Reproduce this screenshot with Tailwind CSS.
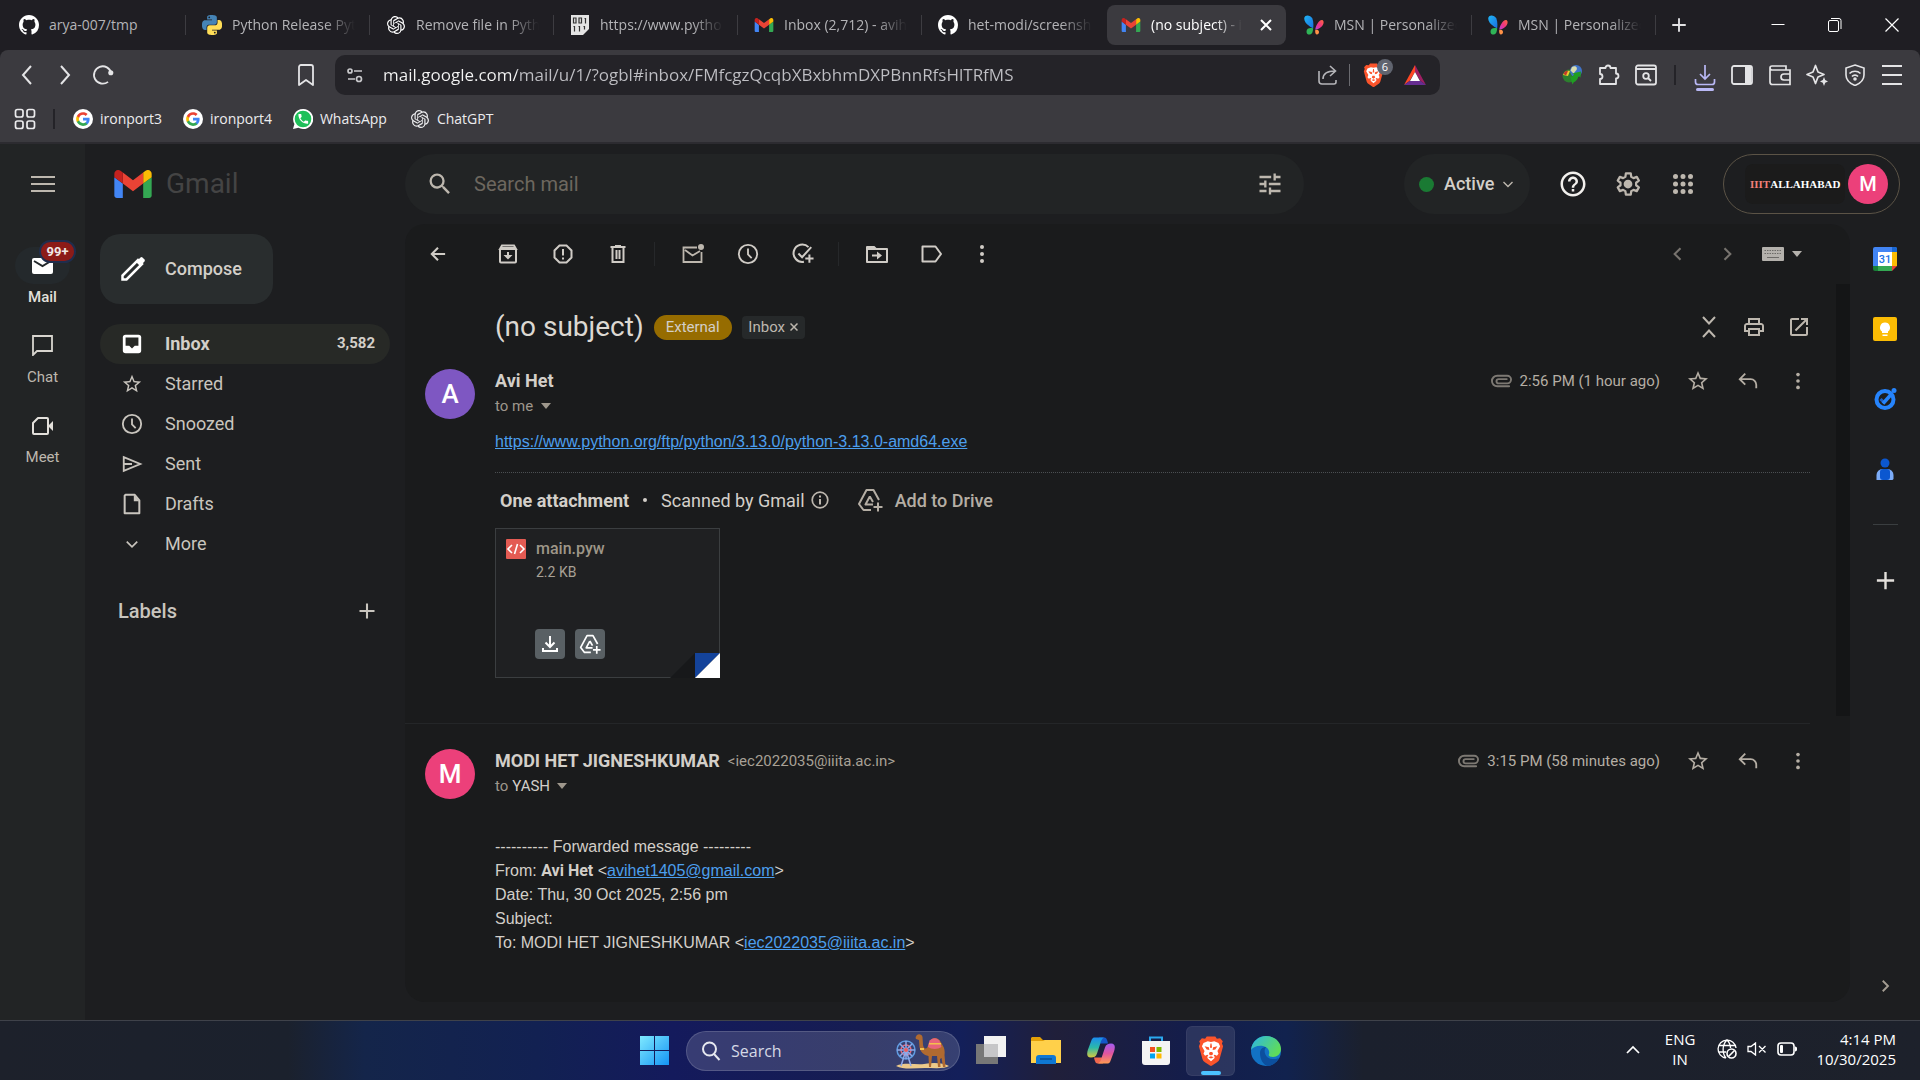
<!DOCTYPE html>
<html lang="en">
<head>
<meta charset="utf-8">
<title>(no subject) - Gmail</title>
<script src="https://cdn.jsdelivr.net/npm/@tailwindcss/browser@4"></script>
</head>
<body class="flex min-h-screen flex-col bg-[#1d1e20] font-['Roboto','Liberation_Sans',sans-serif] text-[#d3cfc9]">

<!-- Shared icon shapes -->
<svg class="absolute size-0" aria-hidden="true">
  <defs><linearGradient id="wingL" x1="0" y1="0" x2="1" y2="1"><stop offset="0" stop-color="#1fb6f5"/><stop offset="1" stop-color="#1a6fe0"/></linearGradient><linearGradient id="wingR" x1="1" y1="0" x2="0" y2="1"><stop offset="0" stop-color="#ff6a3d"/><stop offset=".5" stop-color="#f0357f"/><stop offset="1" stop-color="#b63de0"/></linearGradient></defs>
  <symbol id="github" viewBox="0 0 16 16"><path fill="currentColor" d="M8 0C3.58 0 0 3.58 0 8c0 3.54 2.29 6.53 5.47 7.59.4.07.55-.17.55-.38 0-.19-.01-.82-.01-1.49-2.01.37-2.53-.49-2.69-.94-.09-.23-.48-.94-.82-1.13-.28-.15-.68-.52-.01-.53.63-.01 1.08.58 1.23.82.72 1.21 1.87.87 2.33.66.07-.52.28-.87.51-1.07-1.78-.2-3.64-.89-3.64-3.95 0-.87.31-1.59.82-2.15-.08-.2-.36-1.02.08-2.12 0 0 .67-.21 2.2.82.64-.18 1.32-.27 2-.27.68 0 1.36.09 2 .27 1.53-1.04 2.2-.82 2.2-.82.44 1.1.16 1.92.08 2.12.51.56.82 1.27.82 2.15 0 3.07-1.87 3.75-3.65 3.95.29.25.54.73.54 1.48 0 1.07-.01 1.93-.01 2.2 0 .21.15.46.55.38A8.013 8.013 0 0 0 16 8c0-4.42-3.58-8-8-8z"/></symbol>
  <symbol id="openai" viewBox="0 0 24 24"><path fill="currentColor" d="M22.2819 9.8211a5.9847 5.9847 0 0 0-.5157-4.9108 6.0462 6.0462 0 0 0-6.5098-2.9A6.0651 6.0651 0 0 0 4.9807 4.1818a5.9847 5.9847 0 0 0-3.9977 2.9 6.0462 6.0462 0 0 0 .7427 7.0966 5.98 5.98 0 0 0 .511 4.9107 6.051 6.051 0 0 0 6.5146 2.9001A5.9847 5.9847 0 0 0 13.2599 24a6.0557 6.0557 0 0 0 5.7718-4.2058 5.9894 5.9894 0 0 0 3.9977-2.9001 6.0557 6.0557 0 0 0-.7475-7.0729zm-9.022 12.6081a4.4755 4.4755 0 0 1-2.8764-1.0408l.1419-.0804 4.7783-2.7582a.7948.7948 0 0 0 .3927-.6813v-6.7369l2.02 1.1686a.071.071 0 0 1 .038.052v5.5826a4.504 4.504 0 0 1-4.4945 4.4944zm-9.6607-4.1254a4.4708 4.4708 0 0 1-.5346-3.0137l.142.0852 4.783 2.7582a.7712.7712 0 0 0 .7806 0l5.8428-3.3685v2.3324a.0804.0804 0 0 1-.0332.0615L9.74 19.9502a4.4992 4.4992 0 0 1-6.1408-1.6464zM2.3408 7.8956a4.485 4.485 0 0 1 2.3655-1.9728V11.6a.7664.7664 0 0 0 .3879.6765l5.8144 3.3543-2.0201 1.1685a.0757.0757 0 0 1-.071 0l-4.8303-2.7865A4.504 4.504 0 0 1 2.3408 7.872zm16.5963 3.8558L13.1038 8.364 15.1192 7.2a.0757.0757 0 0 1 .071 0l4.8303 2.7913a4.4944 4.4944 0 0 1-.6765 8.1042v-5.6772a.79.79 0 0 0-.407-.667zm2.0107-3.0231l-.142-.0852-4.7735-2.7818a.7759.7759 0 0 0-.7854 0L9.409 9.2297V6.8974a.0662.0662 0 0 1 .0284-.0615l4.8303-2.7866a4.4992 4.4992 0 0 1 6.6802 4.66zM8.3065 12.863l-2.02-1.1638a.0804.0804 0 0 1-.038-.0567V6.0742a4.4992 4.4992 0 0 1 7.3757-3.4537l-.142.0805L8.704 5.459a.7948.7948 0 0 0-.3927.6813zm1.0976-2.3654l2.602-1.4998 2.6069 1.4998v2.9994l-2.5974 1.4997-2.6067-1.4997Z"/></symbol>
  <symbol id="gmail" viewBox="52 42 88 66"><path fill="#4285f4" d="M58 108h14V74L52 59v43c0 3.32 2.69 6 6 6"/><path fill="#34a853" d="M120 108h14c3.32 0 6-2.69 6-6V59l-20 15"/><path fill="#fbbc04" d="M120 48v26l20-15v-8c0-7.42-8.47-11.65-14.4-7.2"/><path fill="#ea4335" d="M72 74V48l24 18 24-18v26L96 92"/><path fill="#c5221f" d="M52 51v8l20 15V48l-5.6-4.2c-5.94-4.45-14.4-.22-14.4 7.2"/></symbol>
  <symbol id="google" viewBox="0 0 32 32"><circle cx="16" cy="16" r="16" fill="#fff"/><g transform="translate(4 4)"><path fill="#4285f4" d="M22.56 12.25c0-.78-.07-1.53-.2-2.25H12v4.26h5.92c-.26 1.37-1.04 2.53-2.21 3.31v2.77h3.57c2.08-1.92 3.28-4.74 3.28-8.09z"/><path fill="#34a853" d="M12 23c2.97 0 5.46-.98 7.28-2.66l-3.57-2.77c-.98.66-2.23 1.06-3.71 1.06-2.86 0-5.29-1.93-6.16-4.53H2.18v2.84C3.99 20.53 7.7 23 12 23z"/><path fill="#fbbc05" d="M5.84 14.09c-.22-.66-.35-1.36-.35-2.09s.13-1.43.35-2.09V7.07H2.18C1.43 8.55 1 10.22 1 12s.43 3.45 1.18 4.93l2.85-2.22.81-.62z"/><path fill="#ea4335" d="M12 5.38c1.62 0 3.06.56 4.21 1.64l3.15-3.15C17.45 2.09 14.97 1 12 1 7.7 1 3.99 3.47 2.18 7.07l3.66 2.84c.87-2.6 3.3-4.53 6.16-4.53z"/></g></symbol>
  <symbol id="msn" viewBox="0 0 24 24"><path fill="url(#wingL)" d="M.5 3C1.500-1 8 0 10 4c1.500 4 1.500 8 1 12-2-1-3-1-5-3C2 10-.5 6 .5 3z"/><path fill="#2fb457" d="M3 20c0-4 4-5 8-4-.3 4-1 7-4 7.500-2 .3-4-1-4-3.500z"/><path fill="url(#wingR)" d="M23.500 8c-.5-3-4-2.500-6 .5-2 2.500-3.500 6-4 9 2.500.2 5-1 7-3 2-2 3.300-4 3-6.500z"/><path fill="#ff9147" d="M13.500 18c2-.5 4.500 0 4.500 2.500 0 1.500-1 3-2.500 3S13 21 13.500 18z"/></symbol>
  <symbol id="brave" viewBox="0 0 24 28"><path fill="#fb542b" d="M17.500 2.600 16 .5H8L6.500 2.600 3.500 2.200 1 5l.8 2L.7 9.600 4 21.500c.5 1.500 1.200 2.200 2.300 3L11 27.600c.7.500 1.300.5 2 0l4.700-3.100c1.100-.8 1.800-1.500 2.300-3L23.300 9.600 22.200 7l.8-2-2.500-2.800z"/><path fill="#fff" d="M12 5.500 15 5l4 1.500 1.500 3-2.500 4.500 1 2.500-1.500 2-2-1-1 .5 1 1.500-.5 1.500-3 2.500-3-2.500-.5-1.500 1-1.500-1-.5-2 1-1.500-2 1-2.500-2.500-4.500L5 6.500 9 5z"/><path fill="#fb542b" d="M6 9.500 10 10.500 10.500 13 8 12.500zM18 9.500 14 10.500 13.500 13 16 12.500zM10.800 15h2.400l.8 2-2 1.300L10 17zM9.500 19.800l2.500-.9 2.500.9-2.500 1.300zM11.500 7h1l.5 4h-2z"/></symbol>
  <symbol id="clock" viewBox="0 0 24 24"><g fill="none" stroke="currentColor" stroke-width="2"><circle cx="12" cy="12" r="10"/><path d="M12 6v6.500l4 4"/></g></symbol>
  <symbol id="star" viewBox="0 0 24 24"><path fill="currentColor" d="M22 9.240l-7.190-.62L12 2 9.190 8.630 2 9.240l5.460 4.730L5.820 21 12 17.270 18.180 21l-1.630-7.030L22 9.240zM12 15.400l-3.760 2.270 1-4.280-3.320-2.880 4.380-.38L12 6.100l1.710 4.040 4.380.38-3.320 2.880 1 4.280L12 15.400z"/></symbol>
  <symbol id="search" viewBox="0 0 24 24"><path fill="currentColor" d="M15.500 14h-.79l-.28-.27A6.471 6.471 0 0 0 16 9.500 6.500 6.500 0 1 0 9.500 16c1.610 0 3.090-.59 4.230-1.570l.27.280v.79l5 4.990L20.490 19l-4.990-5zm-6 0C7.010 14 5 11.990 5 9.500S7.010 5 9.500 5 14 7.010 14 9.500 11.990 14 9.500 14z"/></symbol>
  <symbol id="dots" viewBox="0 0 24 24"><g fill="currentColor"><circle cx="12" cy="5" r="2"/><circle cx="12" cy="12" r="2"/><circle cx="12" cy="19" r="2"/></g></symbol>
  <symbol id="reply" viewBox="0 0 24 24"><path fill="none" stroke="currentColor" stroke-width="2" d="M9 4 3 10l6 6M3.500 10H15a6 6 0 0 1 6 6v4"/></symbol>
  <symbol id="clip" viewBox="0 0 22 14"><path fill="none" stroke="currentColor" stroke-width="2" stroke-linecap="round" d="M19 12.500H6.500a5.500 5.500 0 0 1 0-11H17a4 4 0 0 1 0 8H8a2.200 2.200 0 0 1 0-4.500h8.500"/></symbol>
  <symbol id="plus" viewBox="0 0 24 24"><path fill="none" stroke="currentColor" stroke-width="2.500" d="M12 3v18M3 12h18"/></symbol>
  <symbol id="left" viewBox="0 0 24 24"><path fill="none" stroke="currentColor" stroke-width="2.500" d="m15 5-7 7 7 7"/></symbol>
  <symbol id="right" viewBox="0 0 24 24"><path fill="none" stroke="currentColor" stroke-width="2.500" d="m9 5 7 7-7 7"/></symbol>
  <symbol id="down" viewBox="0 0 24 24"><path fill="none" stroke="currentColor" stroke-width="2.800" d="m3 8 9 9 9-9"/></symbol>
  <symbol id="caret" viewBox="0 0 10 6"><path fill="currentColor" d="M0 0h10L5 6z"/></symbol>
  <symbol id="drive" viewBox="0 0 26 26"><path fill="none" stroke="currentColor" stroke-width="2" stroke-linejoin="round" d="M14 23H6.500L2 17 9.500 3h7l5.500 10M12.800 9.500 8.500 17.500H16M12.800 9.500l3.200 5.500M21 15.500v9M16.500 20h9"/></symbol>
</svg>

<!-- Tab strip -->
<nav aria-label="Tabs" class="flex h-[50px] items-center bg-[#1f1e23] pl-[2px] font-['Open_Sans','Noto_Sans',sans-serif] text-sm text-[#b4b4b7]">
  <a href="#" class="flex h-5 w-[184px] items-center gap-[10px] border-r border-[#3d3c41] pr-[14px] pl-[17px] text-white"><svg class="size-5 shrink-0"><use href="#github"/></svg><span class="flex-1 overflow-hidden whitespace-nowrap text-[#b4b4b7]">arya-007/tmp</span></a>
  <a href="#" class="flex h-5 w-[184px] items-center gap-[10px] border-r border-[#3d3c41] pr-[14px] pl-[16px]"><svg class="size-5 shrink-0" viewBox="0 0 24 24"><path fill="#4584b6" d="M14.25.18l.9.2.73.26.59.3.45.32.34.34.25.34.16.33.1.3.04.26.02.2-.01.13V8.500l-.05.63-.13.55-.21.46-.26.38-.3.31-.33.25-.35.19-.35.14-.33.1-.3.07-.26.04-.21.02H8.770l-.69.05-.59.14-.5.22-.41.27-.33.32-.27.35-.2.36-.15.37-.1.35-.07.32-.04.27-.02.21v3.060H3.170l-.21-.03-.28-.07-.32-.12-.35-.18-.36-.26-.36-.36-.35-.46-.32-.59-.28-.73-.21-.88-.14-1.050-.05-1.230.06-1.220.16-1.040.24-.87.32-.71.36-.57.4-.44.42-.33.42-.24.4-.16.36-.1.32-.05.24-.01h.16l.06.01h8.160v-.83H6.180l-.01-2.750-.02-.37.05-.34.11-.31.17-.28.25-.26.31-.23.38-.2.44-.18.51-.15.58-.12.64-.1.71-.06.77-.04.84-.02 1.270.05zm-6.300 1.980l-.23.33-.08.41.08.41.23.34.33.22.41.09.41-.09.33-.22.23-.34.08-.41-.08-.41-.23-.33-.33-.22-.41-.09-.41.09z"/><path fill="#ffde57" d="M21.100 6.110l.28.06.32.12.35.18.36.27.36.35.35.47.32.59.28.73.21.88.14 1.040.05 1.230-.06 1.230-.16 1.040-.24.86-.32.71-.36.57-.4.45-.42.33-.42.24-.4.16-.36.09-.32.05-.24.02-.16-.01h-8.220v.82h5.840l.01 2.760.02.36-.05.34-.11.31-.17.29-.25.25-.31.24-.38.2-.44.17-.51.15-.58.13-.64.09-.71.07-.77.04-.84.01-1.270-.04-1.070-.14-.9-.2-.73-.25-.59-.3-.45-.33-.34-.34-.25-.34-.16-.33-.1-.3-.04-.25-.02-.2.01-.13v-5.340l.05-.64.13-.54.21-.46.26-.38.3-.32.33-.24.35-.2.35-.14.33-.1.3-.06.26-.04.21-.02.13-.01h5.840l.69-.05.59-.14.5-.21.41-.28.33-.32.27-.35.2-.36.15-.36.1-.35.07-.32.04-.28.02-.21V6.070h2.090l.14.01zm-6.470 14.250l-.23.33-.08.41.08.41.23.33.33.23.41.08.41-.08.33-.23.23-.33.08-.41-.08-.41-.23-.33-.33-.23-.41-.08-.41.08z"/></svg><span class="flex-1 overflow-hidden whitespace-nowrap [mask-image:linear-gradient(to_right,black_75%,transparent)]">Python Release Python</span></a>
  <a href="#" class="flex h-5 w-[184px] items-center gap-[10px] border-r border-[#3d3c41] pr-[14px] pl-[16px]"><svg class="size-5 shrink-0 p-px text-white"><use href="#openai"/></svg><span class="flex-1 overflow-hidden whitespace-nowrap [mask-image:linear-gradient(to_right,black_75%,transparent)]">Remove file in Python</span></a>
  <a href="#" class="flex h-5 w-[184px] items-center gap-[10px] border-r border-[#3d3c41] pr-[14px] pl-[16px]"><svg class="size-5 shrink-0" viewBox="0 0 20 20"><path fill="#e4e4e4" d="M1 0h18v14l-6 6H1z"/><path fill="none" stroke="#333" stroke-width="1.200" d="M3.500 3h2.500v5H3.500zM9 3h2.500v5H9zM14.500 3.500h1v5M3.500 11.500h1v5M8.500 11.500h1v5M13.500 11.500h1v3"/></svg><span class="flex-1 overflow-hidden whitespace-nowrap [mask-image:linear-gradient(to_right,black_75%,transparent)]">https://www.python.org</span></a>
  <a href="#" class="flex h-5 w-[184px] items-center gap-[10px] border-r border-[#3d3c41] pr-[14px] pl-[16px]"><svg class="h-[14px] w-5 shrink-0"><use href="#gmail"/></svg><span class="flex-1 overflow-hidden whitespace-nowrap [mask-image:linear-gradient(to_right,black_75%,transparent)]">Inbox (2,712) - avihet</span></a>
  <a href="#" class="flex h-5 w-[184px] items-center gap-[10px] pr-[14px] pl-[16px]"><svg class="size-5 shrink-0 text-white"><use href="#github"/></svg><span class="flex-1 overflow-hidden whitespace-nowrap [mask-image:linear-gradient(to_right,black_75%,transparent)]">het-modi/screenshot</span></a>
  <div class="mr-[2px] ml-px flex h-10 w-[179px] items-center gap-[10px] rounded-lg bg-[#3b3a3f] pr-[14px] pl-[14px]"><svg class="h-[14px] w-5 shrink-0"><use href="#gmail"/></svg><a href="#" class="flex-1 overflow-hidden whitespace-nowrap text-white [mask-image:linear-gradient(to_right,black_65%,transparent_92%)]">(no subject) - iec</a><button aria-label="Close tab" class="text-white"><svg class="size-3" viewBox="0 0 12 12"><path stroke="currentColor" stroke-width="2" d="m1 1 10 10M11 1 1 11"/></svg></button></div>
  <a href="#" class="flex h-5 w-[184px] items-center gap-[10px] border-r border-[#3d3c41] pr-[14px] pl-[16px]"><svg class="size-5 shrink-0"><use href="#msn"/></svg><span class="flex-1 overflow-hidden whitespace-nowrap [mask-image:linear-gradient(to_right,black_75%,transparent)]">MSN | Personalized</span></a>
  <a href="#" class="flex h-5 w-[184px] items-center gap-[10px] border-r border-[#3d3c41] pr-[14px] pl-[16px]"><svg class="size-5 shrink-0"><use href="#msn"/></svg><span class="flex-1 overflow-hidden whitespace-nowrap [mask-image:linear-gradient(to_right,black_75%,transparent)]">MSN | Personalized</span></a>
  <button aria-label="New tab" class="flex w-[46px] justify-center text-[#e2e2e4]"><svg class="size-[18px]"><use href="#plus"/></svg></button>
  <div class="ml-auto flex text-white">
    <button aria-label="Minimize" class="flex w-[57px] justify-center"><svg class="size-4" viewBox="0 0 16 16"><path stroke="currentColor" d="M1.500 7.500h13"/></svg></button>
    <button aria-label="Restore" class="flex w-[57px] justify-center"><svg class="size-4" viewBox="0 0 16 16" fill="none" stroke="currentColor"><rect x="1.500" y="3.500" width="10" height="11" rx="1.500"/><path d="M4 1.500h8a2 2 0 0 1 2 2V12"/></svg></button>
    <button aria-label="Close" class="flex w-[57px] justify-center"><svg class="size-4" viewBox="0 0 16 16"><path stroke="currentColor" stroke-width="1.200" d="m1.500 1.500 13 13M14.500 1.500l-13 13"/></svg></button>
  </div>
</nav>

<!-- Browser toolbar -->
<div class="bg-[#1f1e23] font-['Open_Sans','Noto_Sans',sans-serif]">
<div class="rounded-t-lg border-b-2 border-[#2c2b30] bg-[#3b3a3f] text-[#e4e4e6]">
  <div class="flex h-[50px] items-center">
    <div class="flex w-[335px] shrink-0 items-center pl-2">
      <button aria-label="Back" class="flex w-[38px] justify-center"><svg class="h-5 w-4" viewBox="0 0 16 20"><path fill="none" stroke="currentColor" stroke-width="2" d="m12 1-8 9 8 9"/></svg></button>
      <button aria-label="Forward" class="flex w-[38px] justify-center"><svg class="h-5 w-4" viewBox="0 0 16 20"><path fill="none" stroke="currentColor" stroke-width="2" d="m4 1 8 9-8 9"/></svg></button>
      <button aria-label="Reload" class="flex w-[38px] justify-center"><svg class="size-[22px]" viewBox="0 0 24 24"><path fill="none" stroke="currentColor" stroke-width="2" d="M17.500 19.500A9.500 9.500 0 1 1 21 10"/><circle cx="20.500" cy="9.500" r="2.800" fill="currentColor"/></svg></button>
      <button aria-label="Bookmark" class="mr-[14px] ml-auto flex w-[30px] justify-center"><svg class="h-[22px] w-4" viewBox="0 0 16 22"><path fill="none" stroke="currentColor" stroke-width="1.800" stroke-linejoin="round" d="M1 3a2 2 0 0 1 2-2h10a2 2 0 0 1 2 2v18l-7-5-7 5z"/></svg></button>
    </div>
    <div class="flex h-10 flex-1 items-center rounded-[10px] bg-[#242328] pr-[6px] pl-3">
      <svg class="size-4 text-[#c9c9cc]" viewBox="0 0 16 16" fill="none" stroke="currentColor" stroke-width="1.700"><circle cx="3" cy="4" r="2"/><path d="M7 4h8M1 12h7"/><circle cx="12" cy="12" r="2.500"/></svg>
      <label for="url" class="sr-only">Address</label>
      <input id="url" type="text" value="mail.google.com/mail/u/1/?ogbl#inbox/FMfcgzQcqbXBxbhmDXPBnnRfsHlTRfMS" class="ml-5 min-w-0 flex-1 bg-linear-[to_right,#f5f5f5_134px,#bfbfc4_134px] bg-clip-text text-[17px] text-transparent outline-none">
      <button aria-label="Share" class="flex w-9 justify-center text-[#b5b5b9]"><svg class="size-5" viewBox="0 0 20 20" fill="none" stroke="currentColor" stroke-width="1.600"><path d="M1 6v10a3 3 0 0 0 3 3h12a2 2 0 0 0 2-2v-2M5 14c0-6 4-8 12-8M12 1l5.500 5-5.500 5"/></svg></button>
      <span class="ml-[3px] h-[22px] w-px bg-[#6b6b70]"></span>
      <button aria-label="Brave Shields" class="relative flex w-[46px] justify-center"><svg class="h-[24px] w-[21px]"><use href="#brave"/></svg><span class="absolute -top-[4px] right-[3px] size-[16px] rounded-full bg-[#60646f] text-center text-[11px] leading-4 text-white">6</span></button>
      <button aria-label="Brave Rewards" class="flex w-[38px] justify-center"><svg class="h-5 w-[22px]" viewBox="0 0 22 20"><path fill="#ff4724" d="M11 0v7L5.500 16 0 20z"/><path fill="#9e1f63" d="M11 0v7l5.500 9 5.500 4z"/><path fill="#662d91" d="M0 20l5.500-4h11l5.500 4z"/><path fill="#fff" d="m11 7 5 9H6z"/></svg></button>
    </div>
    <div class="flex w-[480px] shrink-0 items-center justify-end pr-[9px]">
      <div class="grid w-[111px] grid-cols-3 justify-items-center">
        <button aria-label="Download manager"><svg class="size-5" viewBox="0 0 20 20"><circle cx="7" cy="11" r="6.500" fill="#2c7f2e"/><path fill="#e8cf31" d="M1 10c1-4 5-5 7-4l-2 5z"/><path fill="#c3392b" d="M1.500 9c1-3 3-3.500 4.500-3l-2 4.500z"/><circle cx="14" cy="6" r="6" fill="#3f73c8"/><path fill="#d9dcae" d="M10 2c3-2 6 0 4.500 3l-3 3.500-3-3z"/><path fill="#1f9e22" d="M8 11c1 2 3 1 4-2l-2-.5 9-2-.5 6-2-1.500c-.5 3-2 5-5 6.500l-1 2-1-3z"/></svg></button>
        <button aria-label="Extensions"><svg class="size-[22px]" viewBox="0 0 22 22"><path fill="none" stroke="currentColor" stroke-width="1.800" stroke-linejoin="round" d="M2 4h5.500a2.500 2.500 0 1 1 5 0H18v5.500a2.500 2.500 0 1 1 0 5V20H2v-5a2.500 2.500 0 0 0 0-5z"/></svg></button>
        <button aria-label="Search tabs"><svg class="size-[22px]" viewBox="0 0 22 22" fill="none" stroke="currentColor" stroke-width="1.800"><rect x="1" y="1.500" width="20" height="19" rx="2"/><path d="M1 5h20M13 14l3 3"/><circle cx="11" cy="12" r="2.800"/></svg></button>
      </div>
      <span class="mx-[10px] h-5 w-[2px] bg-[#242328]"></span>
      <div class="grid w-[225px] grid-cols-6 justify-items-center">
        <button aria-label="Downloads" class="relative text-[#b9b8f5]"><svg class="size-[22px]" viewBox="0 0 22 22" fill="none" stroke="currentColor" stroke-width="1.700"><path d="M11 1v14M6 10l5 5 5-5M1.500 15v3a2.500 2.500 0 0 0 2.500 2.500h14a2.500 2.500 0 0 0 2.500-2.500v-3"/></svg><span class="absolute -bottom-[5px] left-[2px] h-[3px] w-[18px] rounded bg-[#b9b8f5]"></span></button>
        <button aria-label="Sidebar"><svg class="size-[22px]" viewBox="0 0 22 22"><rect x="1" y="2" width="20" height="18" rx="2" fill="none" stroke="currentColor" stroke-width="1.800"/><path fill="currentColor" d="M14 2h6v18h-6z"/></svg></button>
        <button aria-label="Wallet"><svg class="size-[22px]" viewBox="0 0 22 22" fill="none" stroke="currentColor" stroke-width="1.700"><path d="M1 4v14a2.500 2.500 0 0 0 2.500 2.500H21V6H3a2 2 0 0 1 0-4h14v4M21 10h-6a3 3 0 0 0 0 6h6"/></svg></button>
        <button aria-label="Leo AI"><svg class="size-[22px]" viewBox="0 0 22 22"><path fill="none" stroke="currentColor" stroke-width="1.700" stroke-linejoin="round" d="M9.500 1.500 12 8l6 2.500-6 2.500-2.500 6.500L7 13l-6-2.500L7 8z"/><path fill="currentColor" d="m18 13 1.200 3 2.800 1.500-2.800 1.300L18 22l-1.200-3.200-2.800-1.300 2.800-1.500z"/></svg></button>
        <button aria-label="VPN"><svg class="size-[22px]" viewBox="0 0 22 22" fill="none" stroke="currentColor" stroke-width="1.600"><path d="m11 1 9 3v7c0 5-4 8.500-9 10.500C6 19.500 2 16 2 11V4z"/><path d="M5.500 9.500c3-3 8-3 11 0M8 12.500c1.500-1.800 4.500-1.800 6 0"/><circle cx="11" cy="15" r="1" fill="currentColor"/></svg></button>
        <button aria-label="Menu"><svg class="size-[22px]" viewBox="0 0 22 22"><path stroke="currentColor" stroke-width="2" d="M1 2h20M1 11h20M1 20h20"/></svg></button>
      </div>
    </div>
  </div>
  <nav aria-label="Bookmarks" class="flex h-[42px] items-center pb-[4px] pl-[14px] text-sm text-[#ececee]">
    <button aria-label="All bookmarks" class="mr-[17px]"><svg class="size-[22px]" viewBox="0 0 22 22" fill="none" stroke="currentColor" stroke-width="1.700"><rect x="1.500" y="1.500" width="7.500" height="7.500" rx="2"/><rect x="13" y="1.500" width="7.500" height="7.500" rx="2"/><rect x="1.500" y="13" width="7.500" height="7.500" rx="2"/><rect x="13" y="13" width="7.500" height="7.500" rx="2"/></svg></button>
    <span class="mr-[18px] h-5 w-[2px] bg-[#242328]"></span>
    <a href="#" class="mr-[21px] flex items-center gap-[7px]"><svg class="size-5"><use href="#google"/></svg>ironport3</a>
    <a href="#" class="mr-[21px] flex items-center gap-[7px]"><svg class="size-5"><use href="#google"/></svg>ironport4</a>
    <a href="#" class="mr-[23px] flex items-center gap-[7px]"><svg class="size-5" viewBox="0 0 24 24"><path fill="#fff" d="M12 0a12 12 0 1 1-5.500 22.500L0 24l1.700-6A12 12 0 0 1 12 0z"/><circle cx="12" cy="12" r="10" fill="#1fc05a"/><path fill="#fff" transform="translate(4.500 4) scale(.65)" d="M6.620 10.790c1.440 2.830 3.760 5.140 6.590 6.590l2.200-2.200c.27-.27.67-.36 1.020-.24 1.120.37 2.330.57 3.570.57.55 0 1 .45 1 1V20c0 .55-.45 1-1 1-9.390 0-17-7.610-17-17 0-.55.45-1 1-1h3.500c.55 0 1 .45 1 1 0 1.250.2 2.450.57 3.570.11.35.03.74-.25 1.020l-2.200 2.200z"/></svg>WhatsApp</a>
    <a href="#" class="flex items-center gap-[7px]"><svg class="size-5 p-px"><use href="#openai"/></svg>ChatGPT</a>
  </nav>
</div>
</div>

<!-- Mail app -->
<div class="flex flex-1">
  <nav aria-label="Apps" class="flex w-[85px] shrink-0 flex-col items-center bg-[#222425] text-[15px]">
    <button aria-label="Main menu" class="flex h-20 w-full items-center justify-center text-[#bdb7ae]"><svg class="h-4 w-6" viewBox="0 0 24 16"><path stroke="currentColor" stroke-width="2" d="M0 1h24M0 8h24M0 15h24"/></svg></button>
    <a href="#" class="mt-[23px] flex h-20 flex-col items-center font-medium text-[#e3e0db]"><span class="relative flex h-[37px] w-[55px] items-center justify-center rounded-full bg-[#24292c]"><svg class="h-4 w-[21px]" viewBox="0 0 21 16"><rect width="21" height="16" rx="2" fill="#fff"/><path fill="none" stroke="#24292c" stroke-width="2" d="m2 3 8.500 5L19 3"/></svg><span class="absolute -top-[7px] left-6 h-[23px] w-[37px] rounded-full border-2 border-[#1f2d4d] bg-[#8c1b18] text-center text-[13px] leading-[19px] font-bold text-[#f0e8e6]">99+</span></span><span class="mt-[3px] leading-5">Mail</span></a>
    <a href="#" class="flex h-20 flex-col items-center text-[#bdb7ae]"><span class="flex h-[37px] items-center"><svg class="size-[21px] text-[#d8d5cf]" viewBox="0 0 21 21"><path fill="none" stroke="currentColor" stroke-width="1.800" d="M1 20V1h19v15H5z"/></svg></span><span class="mt-[3px] leading-5">Chat</span></a>
    <a href="#" class="flex h-20 flex-col items-center text-[#bdb7ae]"><span class="flex h-[37px] items-center"><svg class="h-[18px] w-[21px] text-[#e3e0db]" viewBox="0 0 21 18"><path fill="none" stroke="currentColor" stroke-width="2" stroke-linejoin="round" d="M6 1h9a1 1 0 0 1 1 1v14a1 1 0 0 1-1 1H2a1 1 0 0 1-1-1V6z"/><path fill="currentColor" d="m16 9 5-5v10z"/></svg></span><span class="mt-[3px] leading-5">Meet</span></a>
  </nav>

  <div class="flex min-w-0 flex-1 flex-col">
    <header class="flex h-20 items-center pr-5">
      <a href="#" class="flex w-[320px] shrink-0 items-center gap-[14px] pl-[29px] text-[28px] leading-9 text-[#444444]"><svg class="h-7 w-[38px]"><use href="#gmail"/></svg>Gmail</a>
      <form class="flex h-[60px] max-w-[899px] flex-1 items-center rounded-full bg-[#222425] pr-[20px] pl-[21px]">
        <button type="button" aria-label="Search" class="text-[#bdb7ae]"><svg class="size-7"><use href="#search"/></svg></button>
        <label for="q" class="sr-only">Search mail</label>
        <input id="q" type="text" placeholder="Search mail" class="ml-[20px] min-w-0 flex-1 bg-transparent text-xl outline-none placeholder:text-[#6d675f]">
        <button type="button" aria-label="Search options" class="text-[#bdb7ae]"><svg class="size-7" viewBox="0 0 24 24"><path fill="currentColor" d="M3 17v2h6v-2H3zM3 5v2h10V5H3zm10 16v-2h8v-2h-8v-2h-2v6h2zM7 9v2H3v2h4v2h2V9H7zm14 4v-2H11v2h10zm-6-4h2V7h4V5h-4V3h-2v6z"/></svg></button>
      </form>
      <button class="ml-auto flex h-[60px] w-[126px] items-center rounded-full bg-[#222425] pl-[15px] text-lg font-medium"><span class="mr-[10px] size-[15px] rounded-full bg-[#1a7a33]"></span>Active<svg class="ml-[8px] size-3 text-[#bdb7ae]"><use href="#down"/></svg></button>
      <div class="ml-[15px] grid w-[165px] grid-cols-3 justify-items-center text-[#bdb7ae]">
        <button aria-label="Support" class="text-[#f2f0ed]"><svg class="size-[30px]" viewBox="0 0 24 24"><path fill="currentColor" d="M11 18h2v-2h-2v2zm1-16C6.480 2 2 6.480 2 12s4.480 10 10 10 10-4.480 10-10S17.520 2 12 2zm0 18c-4.410 0-8-3.590-8-8s3.590-8 8-8 8 3.590 8 8-3.590 8-8 8zm0-14c-2.210 0-4 1.790-4 4h2c0-1.100.9-2 2-2s2 .9 2 2c0 2-3 1.750-3 5h2c0-2.250 3-2.500 3-5 0-2.210-1.790-4-4-4z"/></svg></button>
        <button aria-label="Settings"><svg class="size-[30px]" viewBox="0 0 24 24"><path fill="none" stroke="currentColor" stroke-width="1.800" stroke-linejoin="round" d="m18.500 13 2.200 1.700-1.700 3-2.600-1-1.800 1-.4 2.800H10.300l-.4-2.800-1.800-1-2.600 1-1.700-3L6 13v-2L3.800 9.300l1.700-3 2.600 1 1.800-1 .4-2.800h3.900l.4 2.800 1.800 1 2.600-1 1.700 3L18.500 11z"/><circle cx="12" cy="12" r="3.500" fill="currentColor"/></svg></button>
        <button aria-label="Google apps"><svg class="size-[30px]" viewBox="0 0 24 24"><path fill="none" stroke="currentColor" stroke-width="4" stroke-linecap="round" d="M6 6h.01M12 6h.01M18 6h.01M6 12h.01M12 12h.01M18 12h.01M6 18h.01M12 18h.01M18 18h.01"/></svg></button>
      </div>
      <button aria-label="Account" class="ml-[13px] flex h-[60px] w-[177px] items-center justify-between rounded-full border border-[#5b5346] pr-[11px] pl-[21px]">
        <span class="flex h-10 items-center rounded-lg bg-[#1b1b1b] px-[5px] font-['Liberation_Serif',serif] text-[11px] font-bold text-white"><span class="text-[#f08079]">IIIT</span>ALLAHABAD</span>
        <span class="flex size-10 shrink-0 items-center justify-center rounded-full bg-[#ec407a] text-xl font-medium text-white">M</span>
      </button>
    </header>

    <div class="flex flex-1">
      <!-- Folders -->
      <aside class="w-[320px] shrink-0 pt-[10px] pr-[15px] pl-[15px] text-lg text-[#c9c5be]">
        <button class="flex h-[70px] w-[173px] items-center gap-[19px] rounded-[20px] bg-[#292d2e] pl-[20px] font-medium text-[#d3cfc9]"><svg class="size-[26px]" viewBox="0 0 26 26"><path fill="none" stroke="#fff" stroke-width="2.500" d="M2.500 23.500v-4L18 4l4 4L6.500 23.500z"/><path fill="#fff" d="m16 6 4.500-4.500q1-.8 2 0l2 2q.8 1 0 2L20 10z"/></svg>Compose</button>
        <nav aria-label="Mailboxes" class="mt-5 w-[290px]">
          <a href="#" class="flex h-10 items-center gap-[22px] rounded-full bg-[#272926] pr-[15px] pl-[21px] font-bold text-[#d3cfc9]"><svg class="size-[22px]" viewBox="0 0 24 24"><path fill="#fff" d="M19 2H5a3 3 0 0 0-3 3v14a3 3 0 0 0 3 3h14a3 3 0 0 0 3-3V5a3 3 0 0 0-3-3z"/><path fill="#272926" d="M5 5h14v9h-4l-3 3-3-3H5z"/></svg><span class="flex-1">Inbox</span><span class="text-[15px]">3,582</span></a>
          <a href="#" class="flex h-10 items-center gap-[22px] pl-[21px]"><svg class="size-[22px]"><use href="#star"/></svg>Starred</a>
          <a href="#" class="flex h-10 items-center gap-[22px] pl-[21px]"><svg class="size-[22px]"><use href="#clock"/></svg>Snoozed</a>
          <a href="#" class="flex h-10 items-center gap-[22px] pl-[21px]"><svg class="size-[22px]" viewBox="0 0 24 24"><path fill="none" stroke="currentColor" stroke-width="2" d="M3 4.500 21 12 3 19.500zM4 12h8"/></svg>Sent</a>
          <a href="#" class="flex h-10 items-center gap-[22px] pl-[21px]"><svg class="size-[22px]" viewBox="0 0 24 24"><path fill="none" stroke="currentColor" stroke-width="2.200" stroke-linejoin="round" d="M4 3v19h16V8l-5-6H5z"/><path fill="currentColor" d="M14 2v7h6z"/></svg>Drafts</a>
          <a href="#" class="flex h-10 items-center gap-[22px] pl-[21px]"><svg class="size-[22px] p-1"><use href="#down"/></svg>More</a>
        </nav>
        <div class="mt-[27px] flex h-10 w-[290px] items-center justify-between pr-[13px] pl-[18px] text-xl font-medium">Labels<button aria-label="Create label"><svg class="size-5"><use href="#plus"/></svg></button></div>
      </aside>

      <!-- Conversation -->
      <main class="mb-[18px] flex min-w-0 flex-1 flex-col rounded-[20px] bg-[#1a1b1c]">
        <div class="flex h-[60px] shrink-0 items-center pl-2 text-[#d0ccc6]">
          <button aria-label="Back to Inbox" class="mr-[17px] flex w-[50px] justify-center"><svg class="size-4" viewBox="0 0 18 18"><path fill="none" stroke="currentColor" stroke-width="2.300" d="m9 2-7 7 7 7M2 9h15"/></svg></button>
          <div class="grid w-[165px] grid-cols-3 justify-items-center">
            <button aria-label="Archive"><svg class="size-5" viewBox="0 0 20 20"><path fill="none" stroke="currentColor" stroke-width="2" d="M2 5v12.500c0 .5.500 1 1 1h14c.5 0 1-.5 1-1V5M2 5l2-3.500h12L18 5zM10 8v6"/><path fill="currentColor" d="M3 3h14v3H3zM5.500 11h9L10 15.500z"/></svg></button>
            <button aria-label="Report spam"><svg class="size-5" viewBox="0 0 20 20"><path fill="none" stroke="currentColor" stroke-width="2" d="M6.500 1.500h7l5 5v7l-5 5h-7l-5-5v-7zM10 5v6.500M10 13.500v2"/></svg></button>
            <button aria-label="Delete"><svg class="size-5" viewBox="0 0 20 20"><path fill="none" stroke="currentColor" stroke-width="2" d="M4.500 4v14h11V4M2.500 3h15M7 2h6M8.500 6v9M11.500 6v9"/></svg></button>
          </div>
          <span class="mr-[10px] ml-[9px] h-6 w-px bg-[#26282a]"></span>
          <div class="grid w-[165px] grid-cols-3 justify-items-center">
            <button aria-label="Mark as unread" class="text-[#bdb7ae]"><svg class="h-[22px] w-[22px]" viewBox="0 0 22 22"><path fill="none" stroke="currentColor" stroke-width="1.800" d="M15 4.500H1.500V19h18V9M3 7l7.500 5.500L18 8"/><circle cx="19" cy="4" r="3" fill="currentColor"/></svg></button>
            <button aria-label="Snooze"><svg class="size-[22px]"><use href="#clock"/></svg></button>
            <button aria-label="Add to Tasks"><svg class="size-[22px]" viewBox="0 0 24 24"><path fill="none" stroke="currentColor" stroke-width="2.200" d="M18 4.500A9.500 9.500 0 1 0 13 20.500M7 11.500l4 4L21 4.500M19 12.500v9M14.500 17h9"/></svg></button>
          </div>
          <span class="mr-[10px] ml-[8px] h-6 w-px bg-[#26282a]"></span>
          <div class="grid w-[110px] grid-cols-2 justify-items-center">
            <button aria-label="Move to"><svg class="h-[18px] w-[22px]" viewBox="0 0 22 18"><path fill="none" stroke="currentColor" stroke-width="2" stroke-linejoin="round" d="M1 2v15h20V4H10L8 2z"/><path fill="currentColor" d="M1 1h7l2 4H1zM6 9.500h5V6.500L16 10.500l-5 4v-3H6z"/></svg></button>
            <button aria-label="Labels"><svg class="h-[18px] w-[22px]" viewBox="0 0 22 18"><path fill="none" stroke="currentColor" stroke-width="2" stroke-linejoin="round" d="M1.500 1.500h13L20 9l-5.500 7.500h-13z"/></svg></button>
          </div>
          <button aria-label="More" class="flex w-[45px] justify-center"><svg class="size-6"><use href="#dots"/></svg></button>
          <div class="ml-auto flex items-center pr-[48px]">
            <button aria-label="Newer" class="flex w-[49px] justify-center text-[#77736e]"><svg class="size-5"><use href="#left"/></svg></button>
            <button aria-label="Older" class="flex w-[49px] justify-center text-[#77736e]"><svg class="size-5"><use href="#right"/></svg></button>
            <button aria-label="Input tools" class="ml-[11px] flex items-center gap-[8px] text-[#b4b1ac]"><svg class="h-[14px] w-[22px]" viewBox="0 0 22 14"><rect width="22" height="14" rx="1" fill="currentColor"/><path stroke="#6c6a67" stroke-dasharray="1.500 1" d="M2.500 3.500h17M2.500 6.500h17"/><path stroke="#6c6a67" d="M5 10.500h12"/></svg><svg class="h-[6px] w-[10px]"><use href="#caret"/></svg></button>
          </div>
        </div>

        <div class="flex flex-1">
          <div class="min-w-0 flex-1">
            <div class="mt-[18px] flex h-[50px] items-center pr-[15px] pl-[90px]">
              <h1 class="text-[28px] text-[#dcd8d2]">(no subject)</h1>
              <span class="ml-[10px] flex h-[25px] w-[78px] items-center justify-center rounded-full bg-[#966c00] text-[15px]">External</span>
              <span class="ml-[10px] flex h-[23px] w-[63px] items-center justify-center gap-[5px] rounded bg-[#26292a] text-[15px] text-[#bdb7ae]">Inbox<button aria-label="Remove label Inbox"><svg class="size-2" viewBox="0 0 8 8"><path stroke="currentColor" stroke-width="1.500" d="m.5.5 7 7M7.500.5l-7 7"/></svg></button></span>
              <div class="ml-auto grid w-[135px] grid-cols-3 justify-items-center text-[#bdb7ae]">
                <button aria-label="Collapse all"><svg class="size-6" viewBox="0 0 24 24"><path fill="none" stroke="currentColor" stroke-width="2" d="m6 2 6 6.500L18 2M6 22l6-6.500 6 6.500"/></svg></button>
                <button aria-label="Print all"><svg class="size-6" viewBox="0 0 24 24"><path fill="currentColor" d="M19 8h-1V3H6v5H5c-1.660 0-3 1.340-3 3v6h4v4h12v-4h4v-6c0-1.660-1.340-3-3-3zM8 5h8v3H8V5zm8 12v2H8v-4h8v2zm2-2v-2H6v2H4v-4c0-.55.45-1 1-1h14c.55 0 1 .45 1 1v4h-2z"/></svg></button>
                <button aria-label="In new window"><svg class="size-6" viewBox="0 0 24 24"><path fill="currentColor" d="M19 19H5V5h7V3H5c-1.110 0-2 .9-2 2v14c0 1.100.89 2 2 2h14c1.100 0 2-.9 2-2v-7h-2v7zM14 3v2h3.590l-9.830 9.830 1.410 1.410L19 6.410V10h2V3h-7z"/></svg></button>
              </div>
            </div>

            <article class="mt-[17px] flex gap-[20px] pl-5">
              <span class="flex size-[50px] shrink-0 items-center justify-center rounded-full bg-[#7e57c2] text-[26px] font-medium text-white">A</span>
              <div class="min-w-0 flex-1">
                <div class="flex h-[50px] items-start pr-[13px]">
                  <div>
                    <h2 class="text-lg leading-6 font-bold">Avi Het</h2>
                    <button class="flex items-center gap-[8px] text-[15px] leading-[26px] text-[#9e978c]">to me<svg class="h-[6px] w-[10px]"><use href="#caret"/></svg></button>
                  </div>
                  <div class="ml-auto flex h-6 items-center text-[#b5aea4]">
                    <svg class="mr-[8px] h-[14px] w-[21px] text-[#7d7973]"><use href="#clip"/></svg>
                    <span class="mr-[13px] text-[15px]">2:56 PM (1 hour ago)</span>
                    <button aria-label="Star" class="flex w-[50px] justify-center"><svg class="size-[24px]"><use href="#star"/></svg></button>
                    <button aria-label="Reply" class="flex w-[50px] justify-center"><svg class="size-[22px]"><use href="#reply"/></svg></button>
                    <button aria-label="More" class="flex w-[50px] justify-center"><svg class="size-[22px]"><use href="#dots"/></svg></button>
                  </div>
                </div>
                <p class="mt-[11px] mr-[26px] border-b border-dotted border-[#4b4f52] pb-[18px] font-['Liberation_Sans',Arial,sans-serif] text-base leading-6"><a href="#" class="text-[#4c9fee] underline">https://www.python.org/ftp/python/3.13.0/python-3.13.0-amd64.exe</a></p>
                <div class="mt-[7px] flex h-10 items-center pl-[5px] text-[18px]">
                  <strong>One attachment</strong><span class="mx-[14px] size-[4px] rounded-full bg-[#d3cfc9]"></span>Scanned by Gmail
                  <svg class="ml-[6px] size-[18px] text-[#bdb7ae]" viewBox="0 0 18 18"><circle cx="9" cy="9" r="7.800" fill="none" stroke="currentColor" stroke-width="1.700"/><path stroke="currentColor" stroke-width="2" d="M9 8v5.500M9 4.500v2"/></svg>
                  <button class="ml-[28px] flex items-center gap-[12px] font-medium text-[#b5aea4]"><svg class="size-[26px]"><use href="#drive"/></svg>Add to Drive</button>
                </div>
                <div class="relative mt-[8px] h-[150px] w-[225px] border border-[#3b3e40] bg-[#1f2022] pt-[10px] pl-[10px]">
                  <div class="flex items-center gap-[10px]"><svg class="size-5" viewBox="0 0 20 20"><rect width="20" height="20" rx="1" fill="#e35b53"/><path fill="none" stroke="#fff" stroke-width="1.600" d="M6 6 2 10l4 4M14 6l4 4-4 4M11.500 5l-3 10"/></svg><a href="#" class="text-base leading-5 font-medium text-[#9e9688]">main.pyw</a></div>
                  <p class="mt-[3px] pl-[30px] text-sm leading-5 text-[#a8a196]">2.2 KB</p>
                  <div class="mt-[47px] flex gap-[10px] pl-[29px] text-white">
                    <button aria-label="Download" class="flex size-[30px] items-center justify-center rounded bg-[#596064]"><svg class="size-[18px]" viewBox="0 0 18 18"><path fill="none" stroke="currentColor" stroke-width="2" d="M9 1v11M4.500 7.500 9 12l4.500-4.500M2 13v3h14v-3"/></svg></button>
                    <button aria-label="Add to Drive" class="flex size-[30px] items-center justify-center rounded bg-[#596064]"><svg class="size-[22px]"><use href="#drive"/></svg></button>
                  </div>
                  <svg class="absolute -right-px -bottom-px h-[25px] w-[50px]" viewBox="0 0 50 25"><path fill="#17181a" d="M0 25 25 0v25z"/><path fill="#14439a" d="M25 0h25L25 25z"/><path fill="#fff" d="M50 0v25H25z"/></svg>
                </div>
              </div>
            </article>

            <article class="mt-[45px] mr-[26px] flex gap-[20px] border-t border-[#242628] pt-[25px] pl-5">
              <span class="flex size-[50px] shrink-0 items-center justify-center rounded-full bg-[#ec407a] text-[26px] font-medium text-white">M</span>
              <div class="-mr-[26px] min-w-0 flex-1 pb-[46px]">
                <div class="flex h-[50px] items-start pr-[13px]">
                  <div>
                    <h2 class="flex items-center gap-[8px] text-[15px] leading-6 text-[#a8a196]"><span class="text-lg leading-6 font-bold text-[#d3cfc9]">MODI HET JIGNESHKUMAR</span> &lt;iec2022035@iiita.ac.in&gt;</h2>
                    <button class="flex items-center gap-[4px] text-[15px] leading-[26px] text-[#9e978c]">to <span class="text-[#d3cfc9]">YASH</span><svg class="ml-[3px] h-[6px] w-[10px]"><use href="#caret"/></svg></button>
                  </div>
                  <div class="ml-auto flex h-6 items-center text-[#b5aea4]">
                    <svg class="mr-[8px] h-[14px] w-[21px] text-[#7d7973]"><use href="#clip"/></svg>
                    <span class="mr-[13px] text-[15px]">3:15 PM (58 minutes ago)</span>
                    <button aria-label="Star" class="flex w-[50px] justify-center"><svg class="size-[24px]"><use href="#star"/></svg></button>
                    <button aria-label="Reply" class="flex w-[50px] justify-center"><svg class="size-[22px]"><use href="#reply"/></svg></button>
                    <button aria-label="More" class="flex w-[50px] justify-center"><svg class="size-[22px]"><use href="#dots"/></svg></button>
                  </div>
                </div>
                <div class="mt-[36px] font-['Liberation_Sans',Arial,sans-serif] text-base leading-6">
                  <p>---------- Forwarded message ---------</p>
                  <p>From: <strong class="font-['Roboto']">Avi Het</strong> &lt;<a href="#" class="text-[#4c9fee] underline">avihet1405@gmail.com</a>&gt;</p>
                  <p>Date: Thu, 30 Oct 2025, 2:56 pm</p>
                  <p>Subject:</p>
                  <p>To: MODI HET JIGNESHKUMAR &lt;<a href="#" class="text-[#4c9fee] underline">iec2022035@iiita.ac.in</a>&gt;</p>
                </div>
              </div>
            </article>
          </div>
          <div class="h-[432px] w-[14px] shrink-0 bg-[#141516]"></div>
        </div>
      </main>

      <!-- Side panel -->
      <aside class="flex w-[70px] shrink-0 flex-col items-center">
        <a href="#" aria-label="Calendar" class="flex h-[70px] items-center"><svg class="size-6" viewBox="0 0 24 24"><path fill="#4285f4" d="M2 0h20a2 2 0 0 1 2 2v3H5v14H0V2a2 2 0 0 1 2-2z"/><path fill="#1967d2" d="M19 0h3a2 2 0 0 1 2 2v3h-5z"/><path fill="#fff" d="M5 5h14v14H5z"/><path fill="#fbbc04" d="M19 5h5v14h-5z"/><path fill="#34a853" d="M5 19h14v5H5z"/><path fill="#188038" d="M0 19h5v5H2a2 2 0 0 1-2-2z"/><path fill="#ea4335" d="M19 19h5l-5 5z"/><text x="12" y="16" text-anchor="middle" font-family="Roboto" font-size="11" font-weight="500" fill="#1a73e8">31</text></svg></a>
        <a href="#" aria-label="Keep" class="flex h-[70px] items-center"><svg class="size-6" viewBox="0 0 24 24"><rect width="24" height="24" rx="2" fill="#fbbc04"/><path fill="#fff" d="M12 5.500a5 5 0 0 0-3 9V16h6v-1.500a5 5 0 0 0-3-9zM9.500 17.500h5V19h-5z"/></svg></a>
        <a href="#" aria-label="Tasks" class="flex h-[70px] items-center"><svg class="size-6" viewBox="0 0 24 24"><circle cx="12" cy="12.500" r="8.500" fill="none" stroke="#2684fc" stroke-width="4"/><path fill="none" stroke="#1d5fc4" stroke-width="3" d="m7.500 12 4 4"/><path fill="none" stroke="#2684fc" stroke-width="3.500" d="m10 16.500 9-10"/><circle cx="21" cy="3.500" r="2.500" fill="#2684fc"/></svg></a>
        <a href="#" aria-label="Contacts" class="flex h-[70px] items-center"><svg class="size-6" viewBox="0 0 24 24"><circle cx="12" cy="6" r="4.500" fill="#0b57d0"/><path fill="#7cacf8" d="M3.500 23v-5a6 6 0 0 1 6-6h5a6 6 0 0 1 6 6v4l-1 1z"/><rect x="7" y="12" width="10" height="11" rx="3" fill="#0b57d0"/></svg></a>
        <span class="mt-5 h-px w-[25px] bg-[#3a3e40]"></span>
        <button aria-label="Get add-ons" class="mt-[44px] text-[#e3e0db]"><svg class="size-[23px]"><use href="#plus"/></svg></button>
        <button aria-label="Hide side panel" class="mt-auto mb-[25px] text-[#a49d92]"><svg class="size-[18px]"><use href="#right"/></svg></button>
      </aside>
    </div>
  </div>
</div>

<!-- Taskbar -->
<footer class="grid h-[60px] shrink-0 grid-cols-[1fr_auto_1fr] items-center border-t border-[#3f424a] bg-linear-[to_right,#1d212b_0%,#1b212d_15%,#14254a_19%,#122152_28%,#141a5c_35%,#161d52_45%,#131f5a_50%,#201f3a_55%,#141d4b_62%,#11224e_67%,#1b202d_71%,#1d212b_100%] font-['Open_Sans','Noto_Sans',sans-serif] text-white">
  <span></span>
  <div class="flex items-center pl-[3px]">
    <button aria-label="Start" class="mr-[7px] flex w-[49px] justify-center"><svg class="size-[29px]" viewBox="0 0 29 29"><defs><linearGradient id="win" x1="0" y1="0" x2="1" y2="1"><stop offset="0" stop-color="#7fe9ff"/><stop offset="1" stop-color="#1494f5"/></linearGradient></defs><path fill="url(#win)" d="M0 0h14v14H0zM15 0h14v14H15zM0 15h14v14H0zM15 15h14v14H15z"/></svg></button>
    <div class="mr-[3px] flex h-10 w-[274px] items-center rounded-full border border-white/15 bg-white/15 pr-[9px] pl-[14px]">
      <svg class="size-5" viewBox="0 0 20 20" fill="none" stroke="#e6e8f0" stroke-width="2"><circle cx="8.500" cy="8" r="6.500"/><path d="m13 13 5.500 6"/></svg>
      <label for="tb" class="sr-only">Search Windows</label>
      <input id="tb" type="text" placeholder="Search" class="ml-[10px] w-0 min-w-0 flex-1 bg-transparent text-base outline-none placeholder:text-[#d5d9e6]">
      <svg class="h-9 w-[54px]" viewBox="0 0 54 36"><path fill="#ecc98a" d="M0 33c8-4 20-1 28-2 10-2 20-1 25 2-4 3-14 2-24 2S8 37 0 33z"/><g fill="none" stroke="#5f9be0" stroke-width="1.500"><circle cx="10" cy="17" r="9"/><circle cx="10" cy="17" r="5" stroke="#e56a7c"/><path stroke="#8fa9e8" d="M10 8v18M1 17h18M4 11l12 12M16 11 4 23M10 17 5 33M10 17l5 16"/></g><circle cx="10" cy="17" r="2" fill="#ef5b5b"/><path fill="#b06a30" d="M21 2c2-1.500 5-.5 5.500 2l.5 8c.5 3 2 4 4 3 2-5 4-10 8-10 4 0 6 4 8 8 1.500 2 2 6 1.500 9l1 12h-2.500l-1.500-9-1.500 1 .5 8h-2.500l-1-11h-5l-1 11H33l-.5-11c-5-1-8-4-9-9L23 7l-3-1c-1-1 0-3 1-4z"/><path fill="#e8657a" d="M33 9c2-5 9-5 11 0l1.500 5c-4 2.500-10 2.500-13.500 0z"/><path fill="#f3c14c" d="M33 10h12v1.500H33zM24 15h4v2h-4z"/></svg>
    </div>
    <div class="grid grid-cols-[repeat(6,55px)] items-center justify-items-center">
      <button aria-label="Task view"><svg class="h-[29px] w-[30px]" viewBox="0 0 30 29"><path fill="#f2f2f2" d="M8 0h22v21H8z"/><path fill="#777" d="M0 8h22v20H0z"/><path fill="#c6c6c8" d="M8 8h14v13H8z"/></svg></button>
      <button aria-label="File Explorer"><svg class="h-[29px] w-[30px]" viewBox="0 0 30 29"><path fill="#e3a008" d="M1 1h8l3 3h2v6H0V2z"/><path fill="#ffd04a" d="M0 5h12l2-1h16v23H0z"/><path fill="#0f78d4" d="M5 28v-6a3 3 0 0 1 3-3h14a3 3 0 0 1 3 3v6z"/><path stroke="#0a4f92" stroke-width="1.500" d="M9 23h12"/></svg></button>
      <button aria-label="Copilot"><svg class="h-[27px] w-[28px]" viewBox="0 0 28 26"><defs><linearGradient id="cpA" x1="0" y1="0" x2="0" y2="1"><stop offset="0" stop-color="#1b8cf0"/><stop offset=".5" stop-color="#2bb9a9"/><stop offset="1" stop-color="#d9c93d"/></linearGradient><linearGradient id="cpB" x1="0" y1="0" x2="0" y2="1"><stop offset="0" stop-color="#a35cf2"/><stop offset=".5" stop-color="#e0559f"/><stop offset="1" stop-color="#ff9a52"/></linearGradient></defs><path fill="#1557c8" d="M12 0h5c2 0 3 1 4 6h-8z"/><path fill="#f0684f" d="M16 26h-5c-2 0-3-1-4-6h8z"/><path fill="url(#cpA)" d="M7 0h10c-2 1-3 3-4 7l-3 9c-1 3-3 4-6 4-5 0-4-5-3-8l3-8c1-3 2-4 3-4z"/><path fill="url(#cpB)" d="M21 26H11c2-1 3-3 4-7l3-9c1-3 3-4 6-4 5 0 4 5 3 8l-3 8c-1 3-2 4-3 4z"/></svg></button>
      <button aria-label="Microsoft Store"><svg class="h-[30px] w-[28px]" viewBox="0 0 28 30"><path fill="none" stroke="#2aa8ee" stroke-width="2" d="M8 7V1.500h12V7"/><path fill="#f4f4f4" d="M0 5h28v21a3 3 0 0 1-3 3H3a3 3 0 0 1-3-3z"/><path fill="#f25022" d="M8 11h5v5H8z"/><path fill="#7fba00" d="M14.500 11h5v5h-5z"/><path fill="#00a4ef" d="M8 17.500h5v5H8z"/><path fill="#ffb900" d="M14.500 17.500h5v5h-5z"/></svg></button>
      <button aria-label="Brave" class="relative flex h-[50px] w-[49px] items-center justify-center rounded-md border border-white/5 bg-white/10"><svg class="h-[30px] w-[26px]"><use href="#brave"/></svg><span class="absolute bottom-0 h-[4px] w-5 rounded-full bg-[#4cc2ff]"></span></button>
      <button aria-label="Edge"><svg class="size-[30px]" viewBox="0 0 30 30"><defs><linearGradient id="eg" x1="0" y1="0" x2="1" y2=".5"><stop offset="0" stop-color="#2bb5e8"/><stop offset="1" stop-color="#5fdc5a"/></linearGradient></defs><circle cx="15" cy="15" r="15" fill="#1272c4"/><path fill="url(#eg)" d="M0 14C1 5 8 0 15 0c9 0 15 6 15 13 0 5-4 8-8 8-3 0-5-1-4-3 1-3-1-7-6-8S2 11 0 14z"/><path fill="#0c4f9e" d="M9 17c0-4 3-6 6-6-3 4-1 11 6 12 3 0 5 0 7-1-3 5-7 8-11 8-5-1-8-7-8-13z"/></svg></button>
    </div>
  </div>
  <div class="flex items-center justify-end pr-[24px] pb-[3px] text-[15px] leading-5">
    <button aria-label="Hidden icons" class="mr-[25px]"><svg class="h-[9px] w-[14px]" viewBox="0 0 14 9"><path fill="none" stroke="currentColor" stroke-width="1.700" d="m1 8 6-6 6 6"/></svg></button>
    <button class="mr-[22px] text-center text-[15px]">ENG<br>IN</button>
    <button aria-label="Network, volume, battery" class="mr-[19px] flex items-center gap-[10px]"><svg class="size-5" viewBox="0 0 20 20" fill="none" stroke="currentColor" stroke-width="1.300"><path d="M9 19A9 9 0 1 1 19 9M1.500 6.500h17M1.500 13H9M10 1C5 6 5 14 9 19M10 1c2 2 3.500 5 3.500 8"/><circle cx="14.500" cy="14.500" r="4.500" stroke-width="1.600"/><path stroke-width="1.600" d="m11.500 17.500 6-6"/></svg><svg class="h-[14px] w-5" viewBox="0 0 20 14" fill="none" stroke="currentColor" stroke-width="1.300"><path d="M1 4.500h3L8.500 1v12L4 9.500H1zM12 4l6.500 6.500M18.500 4 12 10.500"/></svg><svg class="h-[14px] w-5" viewBox="0 0 20 14"><rect x="1" y="1" width="16" height="12" rx="3" fill="none" stroke="currentColor" stroke-width="1.600"/><rect x="3" y="3" width="3" height="8" rx="1" fill="currentColor"/><path fill="currentColor" d="M18 4.500a2 2 0 0 1 2 2.500 2 2 0 0 1-2 2.500z"/></svg></button>
    <button class="text-right text-[15px]">4:14 PM<br>10/30/2025</button>
  </div>
</footer>
</body>
</html>
